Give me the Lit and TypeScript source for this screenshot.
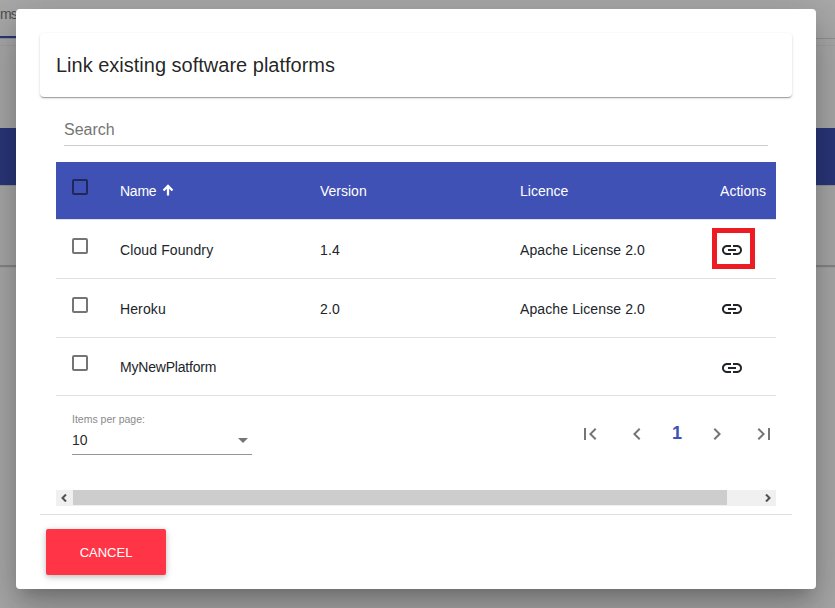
import { LitElement, html, css, svg, nothing } from "lit";
import { customElement, property } from "lit/decorators.js";

const paths: Record<string, string> = {
  link: "M3.9 12c0-1.71 1.39-3.1 3.1-3.1h4V7H7c-2.76 0-5 2.24-5 5s2.24 5 5 5h4v-1.9H7c-1.71 0-3.1-1.39-3.1-3.1zM8 13h8v-2H8v2zm9-6h-4v1.9h4c1.71 0 3.1 1.39 3.1 3.1s-1.39 3.1-3.1 3.1h-4V17h4c2.76 0 5-2.24 5-5s-2.24-5-5-5z",
  first: "M18.41 16.59L13.82 12l4.59-4.59L17 6l-6 6 6 6zM6 6h2v12H6z",
  prev: "M15.41 7.41L14 6l-6 6 6 6 1.41-1.41L10.83 12z",
  next: "M10 6L8.59 7.41 13.17 12l-4.58 4.59L10 18l6-6z",
  last: "M5.59 7.41L10.18 12l-4.59 4.59L7 18l6-6-6-6zM16 6h2v12h-2z",
};

@customElement("mat-glyph")
export class MatGlyph extends LitElement {
  @property() name = "link";
  static styles = css`
    :host { display: block; width: 24px; height: 24px; }
    svg { display: block; width: 100%; height: 100%; fill: currentColor; }
  `;
  render() {
    return html`<svg viewBox="0 0 24 24">${svg`<path d=${paths[this.name]}></path>`}</svg>`;
  }
}

interface Platform { name: string; version: string; licence: string; marked?: boolean; }

const platforms: Platform[] = [
  { name: "Cloud Foundry", version: "1.4", licence: "Apache License 2.0", marked: true },
  { name: "Heroku", version: "2.0", licence: "Apache License 2.0" },
  { name: "MyNewPlatform", version: "", licence: "" },
];

@customElement("app-root")
export class AppRoot extends LitElement {
  static styles = css`
    :host {
      display: block; position: relative; width: 835px; height: 608px; overflow: hidden;
      font-family: "Liberation Sans", Arial, sans-serif; font-size: 14px; color: #212529;
      background: #fafafa;
    }
    * { box-sizing: border-box; }
    .page { height: 608px; }
    .tabs { height: 39px; border-bottom: 1px solid #d6d6d6; display: flex; }
    .tab { width: 17px; height: 38px; padding-top: 6px; border-bottom: 2px solid #3f51b5;
      font-size: 14px; line-height: 17px; letter-spacing: -.8px; color: #757575; }
    .card { margin-top: 7px; height: 221px; padding-top: 82px; border-bottom: 2px solid #c8c8c8;
      box-shadow: 0 0 1px rgba(0,0,0,.25); }
    .band { height: 57px; background: #3f51b5; }
    .under { height: 1px; background: #dadada; }
    .backdrop { position: absolute; inset: 0; background: rgba(0,0,0,.32); padding: 9px 19px 19px 16px; }
    .dialog { width: 800px; height: 580px; padding: 24px; background: #fff; border-radius: 4px;
      box-shadow: 0 11px 15px -7px rgba(0,0,0,.2), 0 24px 38px 3px rgba(0,0,0,.14), 0 9px 46px 8px rgba(0,0,0,.12); }
    .title { height: 64px; padding: 0 16px; border-radius: 4px; line-height: 64px; font-size: 20px;
      color: rgba(0,0,0,.87);
      box-shadow: 0 2px 1px -1px rgba(0,0,0,.2), 0 1px 1px 0 rgba(0,0,0,.14), 0 1px 3px 0 rgba(0,0,0,.15); }
    .search { margin: 16px 24px 0; height: 33px; line-height: 33px; font-size: 16px; color: #757575;
      border-bottom: 1px solid #ccc; }
    .table { margin: 16px 16px 0; }
    .row { display: grid; grid-template-columns: 64px 200px 200px 192px 64px; align-items: center;
      height: 59px; border-bottom: 1px solid #dee2e6; position: relative; }
    .head { height: 58px; background: #3f51b5; background-clip: padding-box; color: #fff; }
    .row.tail { height: 58px; }
    .box { width: 16px; height: 16px; margin: 0 0 7px 16px; border: 2px solid #757575; border-radius: 2px; }
    .head .box { border-color: #1f2859; }
    .text { letter-spacing: .11px; padding-top: 2px; }
    .tail .text { letter-spacing: -.2px; padding-top: 0; }
    .name { display: flex; align-items: center; letter-spacing: -.25px; }
    .arrow { width: 12px; height: 12px; margin: -1px 0 0 6px; fill: none; stroke: currentColor; stroke-width: 2.3; }
    .act { margin: 2px 0 0 8px; }
    .right { text-align: right; padding-right: 10px; white-space: nowrap; }
    .mark { position: absolute; left: 656px; top: 8px; width: 43px; height: 41px; border: 5px solid #ed1c24; }
    .pager { margin: 0 16px; height: 94px; padding: 0 0 0 16px; display: flex; justify-content: space-between; }
    .select { width: 180px; height: 59px; border-bottom: 1px solid #949494; padding-top: 17px; }
    .label { font-size: 10.5px; line-height: 12px; color: #8a8a8a; }
    .value { display: flex; justify-content: space-between; align-items: center; line-height: 16px;
      margin-top: 7px; color: rgba(0,0,0,.87); }
    .caret { border: 5px solid transparent; border-top-color: #757575; border-bottom: 0; margin-right: 4px; }
    .nav { display: flex; margin: 26px -14px 0 0; color: #757575; }
    .cell { width: 40px; display: flex; justify-content: center; }
    .edge { width: 53px; }
    .edge:first-child { width: 54px; padding-right: 1px; }
    .current { color: #3f51b5; font-weight: 700; font-size: 18px; line-height: 22px; }
    .scroll { margin: 0 16px; height: 16px; background: #f0f0f0; display: flex; color: #505050; }
    .btn { width: 17px; height: 15px; display: flex; align-items: center; justify-content: center; }
    .btn svg { width: 7px; height: 8px; fill: none; stroke: currentColor; stroke-width: 2; }
    .thumb { width: 654px; height: 15px; background: #cdcdcd; margin-right: auto; }
    .rule { margin-top: 8px; height: 1px; background: #e0e0e0; }
    .cancel { display: block; margin: 14px 0 0 6px; width: 120px; height: 46px; border: 0; border-radius: 2px;
      background: #ff3547; color: #fff; font: 13px "Liberation Sans", Arial, sans-serif;
      box-shadow: 0 2px 5px rgba(0,0,0,.16), 0 2px 10px rgba(0,0,0,.12); padding: 0; }
  `;

  row(p: Platform, i: number) {
    return html`<div class="row ${i === platforms.length - 1 ? "tail" : ""}">
      <span class="box"></span><span class="text">${p.name}</span><span class="text">${p.version}</span><span class="text">${p.licence}</span>
      <mat-glyph class="act" name="link"></mat-glyph>
      ${p.marked ? html`<span class="mark"></span>` : nothing}
    </div>`;
  }

  render() {
    return html`
      <div class="page">
        <div class="tabs"><div class="tab">ms</div></div>
        <div class="card"><div class="band"></div><div class="under"></div></div>
      </div>
      <div class="backdrop">
        <div class="dialog">
          <div class="title">Link existing software platforms</div>
          <div class="search">Search</div>
          <div class="table">
            <div class="row head">
              <span class="box"></span>
              <span class="name">Name<svg class="arrow" viewBox="0 0 12 12"><path d="M6 11.500V2M1.500 6.500L6 2 10.500 6.500"></path></svg></span>
              <span>Version</span><span>Licence</span><span class="right">Actions</span>
            </div>
            ${platforms.map((p, i) => this.row(p, i))}
          </div>
          <div class="pager">
            <div class="select">
              <div class="label">Items per page:</div>
              <div class="value"><span>10</span><span class="caret"></span></div>
            </div>
            <div class="nav">
              <span class="cell edge"><mat-glyph name="first"></mat-glyph></span>
              <span class="cell"><mat-glyph name="prev"></mat-glyph></span>
              <span class="cell current">1</span>
              <span class="cell"><mat-glyph name="next"></mat-glyph></span>
              <span class="cell edge"><mat-glyph name="last"></mat-glyph></span>
            </div>
          </div>
          <div class="scroll">
            <span class="btn"><svg viewBox="0 0 7 8"><path d="M5 .5L1.500 4l3.500 3.500"></path></svg></span>
            <span class="thumb"></span>
            <span class="btn"><svg viewBox="0 0 7 8"><path d="M2 .5L5.500 4 2 7.500"></path></svg></span>
          </div>
          <div class="rule"></div>
          <button class="cancel">CANCEL</button>
        </div>
      </div>`;
  }
}
